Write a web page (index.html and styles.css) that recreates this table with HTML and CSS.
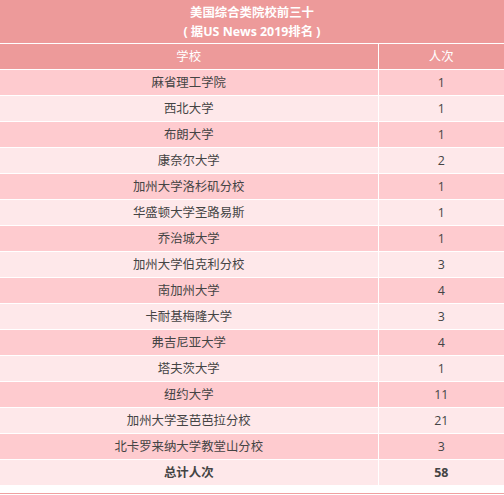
FILE: index.html
```html
<!DOCTYPE html>
<html lang="zh">
<head>
<meta charset="utf-8">
<link rel="stylesheet" href="styles.css">
</head>
<body>
<table class="rank">
  <colgroup><col class="col-name"><col class="col-num"></colgroup>
  <thead>
    <tr><th class="title" colspan="2">美国综合类院校前三十<br>( 据US News 2019排名 )</th></tr>
    <tr class="head"><th>学校</th><th>人次</th></tr>
  </thead>
  <tbody>
    <tr class="odd"><td>麻省理工学院</td><td>1</td></tr>
    <tr class="even"><td>西北大学</td><td>1</td></tr>
    <tr class="odd"><td>布朗大学</td><td>1</td></tr>
    <tr class="even"><td>康奈尔大学</td><td>2</td></tr>
    <tr class="odd"><td>加州大学洛杉矶分校</td><td>1</td></tr>
    <tr class="even"><td>华盛顿大学圣路易斯</td><td>1</td></tr>
    <tr class="odd"><td>乔治城大学</td><td>1</td></tr>
    <tr class="even"><td>加州大学伯克利分校</td><td>3</td></tr>
    <tr class="odd"><td>南加州大学</td><td>4</td></tr>
    <tr class="even"><td>卡耐基梅隆大学</td><td>3</td></tr>
    <tr class="odd"><td>弗吉尼亚大学</td><td>4</td></tr>
    <tr class="even"><td>塔夫茨大学</td><td>1</td></tr>
    <tr class="odd"><td>纽约大学</td><td>11</td></tr>
    <tr class="even"><td>加州大学圣芭芭拉分校</td><td>21</td></tr>
    <tr class="odd"><td>北卡罗来纳大学教堂山分校</td><td>3</td></tr>
    <tr class="even total"><td>总计人次</td><td>58</td></tr>
  </tbody>
</table>
<div class="rule"></div>
</body>
</html>
```
FILE: styles.css
```css
html, body {
  margin: 0;
  padding: 0;
  background: #ffffff;
}
body {
  font-family: "Open Sans", "Noto Sans CJK SC", sans-serif;
  font-size: 12.4px;
  color: #444444;
}
.rank {
  width: 504px;
  border-collapse: collapse;
  table-layout: fixed;
}
.col-name { width: 378px; }
.col-num { width: 126px; }
.rank th, .rank td {
  border: 1px solid #ffffff;
  text-align: center;
  padding: 0;
  line-height: 25px;
  height: 25px;
}
.rank tr:first-child th { border-top: 0; }
.rank th:first-child, .rank td:first-child { border-left: 0; }
.rank th:last-child, .rank td:last-child { border-right: 0; }
.rank .title {
  background: #ed9a9a;
  color: #ffffff;
  font-weight: bold;
  line-height: 19px;
  height: 43px;
}
.rank .head th {
  background: #ed9a9a;
  color: #ffffff;
  font-weight: normal;
}
.odd td { background: #fecbcf; }
.even td { background: #fee8ea; }
.total td { font-weight: bold; }
.rank tbody tr:last-child td { border-bottom: 0; }
.rule {
  margin-top: 8px;
  border-top: 1px solid #f0a0a0;
}
```
